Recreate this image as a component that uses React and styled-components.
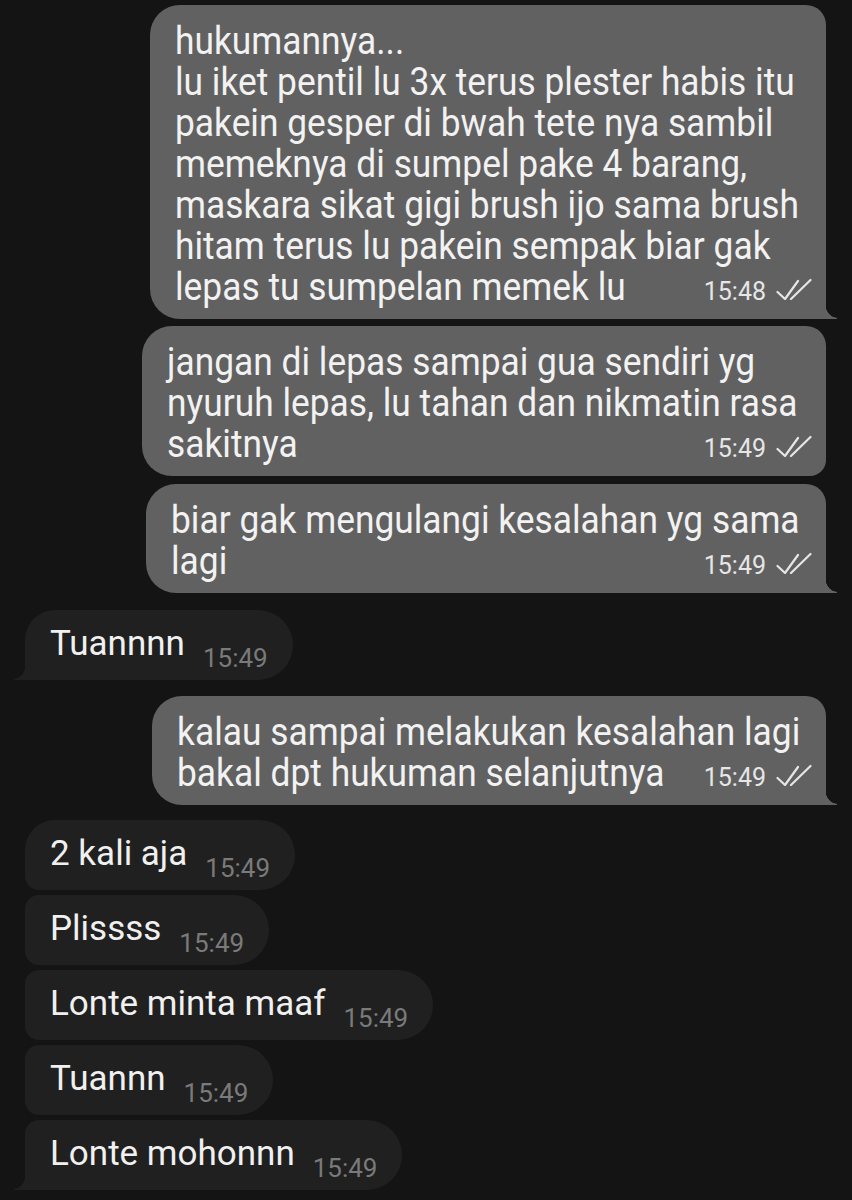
import React from "react";
import styled, { createGlobalStyle } from "styled-components";

const GlobalStyle = createGlobalStyle`
  html, body {
    margin: 0;
    padding: 0;
    background: #141414;
    overflow-x: hidden;
  }
`;

const OUT = "#616161";
const IN = "#202020";

const messages = [
  {
    out: true, left: 150, gap: 5, tail: true,
    lines: [
      "hukumannya...",
      "lu iket pentil lu 3x terus plester habis itu",
      "pakein gesper di bwah tete nya sambil",
      "memeknya di sumpel pake 4 barang,",
      "maskara sikat gigi brush ijo sama brush",
      "hitam terus lu pakein sempak biar gak",
      "lepas tu sumpelan memek lu",
    ],
    time: "15:48",
  },
  {
    out: true, left: 142, gap: 7, tail: false,
    lines: [
      "jangan di lepas sampai gua sendiri yg",
      "nyuruh lepas, lu tahan dan nikmatin rasa",
      "sakitnya",
    ],
    time: "15:49",
  },
  {
    out: true, left: 146, gap: 8, tail: true,
    lines: ["biar gak mengulangi kesalahan yg sama", "lagi"],
    time: "15:49",
  },
  { out: false, text: "Tuannnn", time: "15:49", gap: 17, shape: "single" },
  {
    out: true, left: 152, gap: 16, tail: true,
    lines: ["kalau sampai melakukan kesalahan lagi", "bakal dpt hukuman selanjutnya"],
    time: "15:49",
  },
  { out: false, text: "2 kali aja", time: "15:49", gap: 15, shape: "first" },
  { out: false, text: "Plissss", time: "15:49", gap: 5, shape: "middle" },
  { out: false, text: "Lonte minta maaf", time: "15:49", gap: 5, shape: "middle" },
  { out: false, text: "Tuannn", time: "15:49", gap: 5, shape: "middle" },
  { out: false, text: "Lonte mohonnn", time: "15:49", gap: 5, shape: "last" },
];

const Page = styled.div`
  min-height: 1200px;
  box-sizing: border-box;
  padding: 0 26px 10px 0;
  display: flex;
  flex-direction: column;
  overflow: hidden;
  background: #141414;
  font-family: Roboto, "Liberation Sans", sans-serif;
`;

const OutBubble = styled.div`
  position: relative;
  margin-left: ${(p) => p.$left}px;
  margin-top: ${(p) => p.$gap}px;
  padding: 16px 14px 11px 25px;
  background: ${OUT};
  border-radius: 30px 20px ${(p) => (p.$tail ? "0" : "16px")} 30px;

  &::after {
    content: "";
    display: ${(p) => (p.$tail ? "block" : "none")};
    position: absolute;
    right: -11px;
    bottom: 0;
    width: 12px;
    height: 16px;
    background: radial-gradient(ellipse 12px 15px at 100% 0, transparent 96%, ${OUT} 100%);
  }
`;

const OutLine = styled.div`
  font-size: 38px;
  line-height: 41px;
  color: #f2f2f2;
  white-space: nowrap;
  transform: scaleX(0.93);
  transform-origin: left center;
`;

const LastRow = styled.div`
  display: flex;
  align-items: baseline;
`;

const Meta = styled.div`
  margin-left: auto;
  display: flex;
  align-items: baseline;
  gap: 10px;
  font-size: 25px;
  color: #e6e6e6;
`;

const InBubble = styled.div`
  position: relative;
  align-self: flex-start;
  margin-left: 25px;
  margin-top: ${(p) => p.$gap}px;
  height: 70px;
  box-sizing: border-box;
  padding: 0 25px;
  display: flex;
  align-items: flex-end;
  gap: 18px;
  background: ${IN};
  border-radius: ${(p) =>
    ({
      single: "30px 35px 35px 0",
      first: "30px 35px 35px 14px",
      middle: "14px 35px 35px 14px",
      last: "14px 35px 35px 0",
    }[p.$shape])};

  &::before {
    content: "";
    display: ${(p) => (p.$shape === "single" || p.$shape === "last" ? "block" : "none")};
    position: absolute;
    left: -11px;
    bottom: 0;
    width: 12px;
    height: 16px;
    background: radial-gradient(ellipse 12px 15px at 0 0, transparent 96%, ${IN} 100%);
  }
`;

const InText = styled.span`
  font-size: 35px;
  line-height: 1.17;
  color: #f0f0f0;
  margin-bottom: 15px;
  white-space: nowrap;
`;

const InTime = styled.span`
  font-size: 26px;
  line-height: 1.17;
  color: #7a7a7a;
  margin-bottom: 7px;
`;

const Checks = () => (
  <svg width="36" height="22" viewBox="0 0 36 22" fill="none">
    <path d="M1.5 14 L9 21 L22 3" stroke="#e6e6e6" strokeWidth="2.2" strokeLinecap="round" strokeLinejoin="round" />
    <path d="M15 21 L34.5 2" stroke="#e6e6e6" strokeWidth="2.2" strokeLinecap="round" />
  </svg>
);

const Outgoing = ({ m }) => {
  const head = m.lines.slice(0, -1);
  const last = m.lines[m.lines.length - 1];
  return (
    <OutBubble $left={m.left} $gap={m.gap} $tail={m.tail}>
      {head.map((l, i) => (
        <OutLine key={i}>{l}</OutLine>
      ))}
      <LastRow>
        <OutLine>{last}</OutLine>
        <Meta>
          <span>{m.time}</span>
          <Checks />
        </Meta>
      </LastRow>
    </OutBubble>
  );
};

const Incoming = ({ m }) => (
  <InBubble $gap={m.gap} $shape={m.shape}>
    <InText>{m.text}</InText>
    <InTime>{m.time}</InTime>
  </InBubble>
);

export default function App() {
  return (
    <>
      <GlobalStyle />
      <Page>
        {messages.map((m, i) =>
          m.out ? <Outgoing key={i} m={m} /> : <Incoming key={i} m={m} />
        )}
      </Page>
    </>
  );
}
